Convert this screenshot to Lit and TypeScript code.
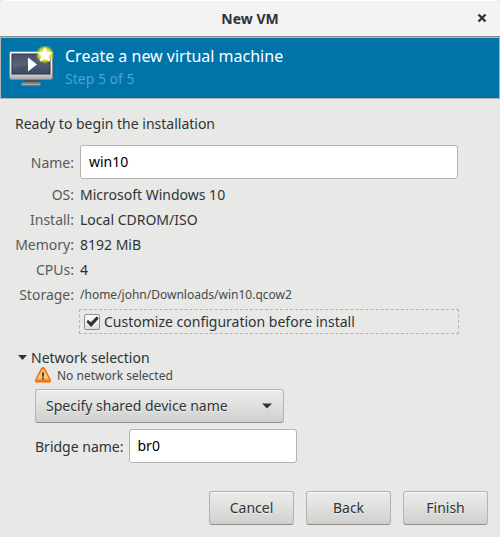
import { LitElement, html, css, svg } from "lit";
import { customElement, state } from "lit/decorators.js";

const monitorIcon = svg`
  <defs>
    <linearGradient id="bezel" x1="0" y1="0" x2="0" y2="1">
      <stop offset="0" stop-color="#ffffff"></stop>
      <stop offset="0.75" stop-color="#dcdcdc"></stop>
      <stop offset="1" stop-color="#a8a8a8"></stop>
    </linearGradient>
    <linearGradient id="screen" x1="0" y1="0" x2="0" y2="1">
      <stop offset="0" stop-color="#3a465c"></stop>
      <stop offset="0.5" stop-color="#4d5a70"></stop>
      <stop offset="1" stop-color="#3d4a61"></stop>
    </linearGradient>
    <linearGradient id="foot" x1="0" y1="0" x2="0" y2="1">
      <stop offset="0" stop-color="#6a6a68"></stop>
      <stop offset="1" stop-color="#c4c4c2"></stop>
    </linearGradient>
    <radialGradient id="glow">
      <stop offset="0" stop-color="#f2f20a"></stop>
      <stop offset="0.65" stop-color="#d6e318"></stop>
      <stop offset="1" stop-color="#a6c832" stop-opacity="0"></stop>
    </radialGradient>
  </defs>
  <path d="M17 33h11l1 4H16z" fill="#4b4f52"></path>
  <rect x="12.500" y="36.500" width="19" height="3" rx="1" fill="url(#foot)" stroke="#77797a"></rect>
  <rect x="0.500" y="5.500" width="43" height="28" rx="2" fill="url(#bezel)" stroke="#85898c"></rect>
  <rect x="3" y="8" width="38" height="20" fill="url(#screen)" stroke="#2b3548" stroke-width="1"></rect>
  <path d="M3.500 8.500h37v7C28 16 14 19 3.500 24z" fill="#ffffff" opacity="0.06"></path>
  <path d="M19 11.500v14l9-7z" fill="#ffffff"></path>
  <circle cx="36" cy="8.500" r="9.500" fill="url(#glow)"></circle>
  <path d="M36 1.500l2 4.500 5 .6-3.600 3.400 1.200 5-4.600-2.500-4.600 2.500 1.200-5L29 6.600l5-.6z"
    fill="#ffffff" stroke="#ffffff" stroke-width="0.800" stroke-linejoin="round"></path>`;

const warningIcon = svg`
  <defs>
    <linearGradient id="warn" x1="0" y1="0" x2="0" y2="1">
      <stop offset="0" stop-color="#fbb05a"></stop>
      <stop offset="0.65" stop-color="#fdcb92"></stop>
      <stop offset="1" stop-color="#f88a1c"></stop>
    </linearGradient>
  </defs>
  <path d="M6.800 1.400Q8 .2 9.200 1.400L15.300 13Q15.600 14.700 14.300 14.700H1.700Q.4 14.700.7 13z"
    fill="url(#warn)" stroke="#ee6c00" stroke-width="1.400" stroke-linejoin="round"></path>
  <path d="M2 13.500h12" stroke="#f57900" stroke-width="1.400"></path>
  <path d="M7 5.500h2l-.3 4.500H7.300z" fill="#2e3436"></path>
  <rect x="7.100" y="10.700" width="1.800" height="1.600" fill="#2e3436"></rect>`;

@customElement("app-root")
export class AppRoot extends LitElement {
  static styles = css`
    :host {
      display: flex;
      flex-direction: column;
      min-height: 100vh;
      box-sizing: border-box;
      background: #e8e8e6;
      color: #2e3436;
      font: 14px/25px "Noto Sans", "Open Sans", sans-serif;
    }
    * {
      box-sizing: border-box;
    }
    .titlebar {
      display: grid;
      grid-template-columns: 36px 1fr 36px;
      align-items: center;
      height: 37px;
      padding-bottom: 1px;
      background: #f3f3f3;
      border-top: 1px solid #ffffff;
      border-bottom: 1px solid #8c8d89;
      border-radius: 6px 6px 0 0;
    }
    .title {
      grid-column: 2;
      margin: 0;
      font-size: 14px;
      font-weight: 700;
      text-align: center;
    }
    .close {
      display: grid;
      place-items: center;
      height: 32px;
      padding: 0;
      border: 0;
      background: none;
    }
    .banner {
      display: flex;
      align-items: center;
      gap: 10px;
      height: 62px;
      padding: 0 8px 2px;
      background: #0073a9;
      border: 1px solid #b3b4b0;
      color: #ffffff;
    }
    .banner-icon {
      flex: none;
    }
    .heading {
      margin: 0;
      font-size: 16px;
      font-weight: 400;
      line-height: 24px;
    }
    .step {
      margin: 0;
      line-height: 22px;
      color: #4ba3d8;
    }
    .content {
      padding: 12px 42px 0 15px;
    }
    .intro {
      margin: 0 0 9px;
    }
    .summary {
      display: grid;
      grid-template-columns: 59px 1fr;
      column-gap: 6px;
      align-items: center;
    }
    .label {
      color: #565b5c;
      text-align: right;
      white-space: nowrap;
    }
    .entry {
      width: 100%;
      height: 34px;
      padding: 0 8px 2px;
      border: 1px solid #b3b4b0;
      border-radius: 3px;
      background: #ffffff;
      color: #000000;
      font: inherit;
    }
    .name {
      margin-bottom: 3px;
    }
    .small {
      font-size: 12px;
      color: #454a4c;
    }
    .customize {
      grid-column: 2;
      display: flex;
      align-items: center;
      gap: 4px;
      height: 25px;
      margin: 2px -1px 0;
      padding: 0 4px;
      border: 1px dashed #b3b4b0;
    }
    .check {
      appearance: none;
      flex: none;
      width: 16px;
      height: 16px;
      margin: 0;
      border: 1px solid #8f908c;
      border-radius: 2px;
      background: linear-gradient(#ffffff, #dededc);
    }
    .check:checked::before {
      content: "";
      display: block;
      width: 14px;
      height: 14px;
      background: #2e3436;
      clip-path: polygon(20% 38%, 42% 56%, 84% 12%, 98% 28%, 44% 90%, 12% 56%);
    }
    .network {
      margin-top: 13px;
    }
    .expander {
      display: flex;
      align-items: center;
      gap: 4px;
      height: 20px;
      padding-left: 3px;
      list-style: none;
    }
    .device {
      padding-left: 20px;
    }
    .warning {
      display: flex;
      align-items: center;
      gap: 6px;
      height: 16px;
      margin-bottom: 6px;
    }
    .combo {
      position: relative;
      width: 249px;
    }
    .select,
    .button {
      height: 34px;
      border: 1px solid #b3b4b0;
      border-bottom-color: #8f908c;
      border-radius: 3px;
      background: linear-gradient(#ebebea, #e2e2e0 40%, #cfcfcd);
      box-shadow: inset 0 1px #f8f8f7;
      color: #2e3436;
      font: inherit;
      text-shadow: 0 1px #f0f0ef;
    }
    .select {
      appearance: none;
      display: block;
      width: 100%;
      padding: 0 32px 2px 10px;
    }
    .combo-arrow {
      position: absolute;
      top: 14px;
      right: 12px;
      pointer-events: none;
    }
    .bridge {
      display: flex;
      align-items: center;
      gap: 5px;
      margin-top: 6px;
    }
    .bridge .entry {
      width: 168px;
    }
    .actions {
      display: flex;
      justify-content: flex-end;
      gap: 12px;
      margin-top: auto;
      padding: 12px;
    }
    .button {
      width: 85px;
      padding: 0 0 2px;
    }
  `;

  @state() private name = "win10";
  @state() private bridge = "br0";

  private details = [
    ["OS:", "Microsoft Windows 10"],
    ["Install:", "Local CDROM/ISO"],
    ["Memory:", "8192 MiB"],
    ["CPUs:", "4"],
  ];

  render() {
    return html`
      <header class="titlebar">
        <h1 class="title">New VM</h1>
        <button class="close" aria-label="Close">
          <svg width="10" height="10" viewBox="0 0 10 10">
            <path d="M1.500 1.500l7 7M8.500 1.500l-7 7" stroke="#2e3436" stroke-width="2.400"></path>
          </svg>
        </button>
      </header>
      <section class="banner">
        <svg class="banner-icon" width="46" height="42" viewBox="0 0 46 42">${monitorIcon}</svg>
        <div>
          <h2 class="heading">Create a new virtual machine</h2>
          <p class="step">Step 5 of 5</p>
        </div>
      </section>
      <main class="content">
        <p class="intro">Ready to begin the installation</p>
        <div class="summary">
          <label class="label name" for="name">Name:</label>
          <input class="entry name" id="name" .value=${this.name}
            @input=${(e: Event) => (this.name = (e.target as HTMLInputElement).value)} />
          ${this.details.map(
            ([label, value]) => html`<span class="label">${label}</span><span>${value}</span>`
          )}
          <span class="label">Storage:</span>
          <span class="small">/home/john/Downloads/win10.qcow2</span>
          <label class="customize">
            <input class="check" type="checkbox" checked />
            Customize configuration before install
          </label>
        </div>
        <details class="network" open>
          <summary class="expander">
            <svg width="9" height="5" viewBox="0 0 9 5"><path d="M0 0h9L4.500 5z" fill="#2e3436"></path></svg>
            Network selection
          </summary>
          <div class="device">
            <div class="warning">
              <svg width="16" height="16" viewBox="0 0 16 16">${warningIcon}</svg>
              <span class="small">No network selected</span>
            </div>
            <div class="combo">
              <select class="select" aria-label="Network source">
                <option>Specify shared device name</option>
              </select>
              <svg class="combo-arrow" width="10" height="6" viewBox="0 0 10 6">
                <path d="M0 0.500h10L5 5.500z" fill="#2e3436"></path>
              </svg>
            </div>
            <div class="bridge">
              <label for="bridge">Bridge name:</label>
              <input class="entry" id="bridge" .value=${this.bridge}
                @input=${(e: Event) => (this.bridge = (e.target as HTMLInputElement).value)} />
            </div>
          </div>
        </details>
      </main>
      <footer class="actions">
        <button class="button">Cancel</button>
        <button class="button">Back</button>
        <button class="button">Finish</button>
      </footer>
    `;
  }
}
